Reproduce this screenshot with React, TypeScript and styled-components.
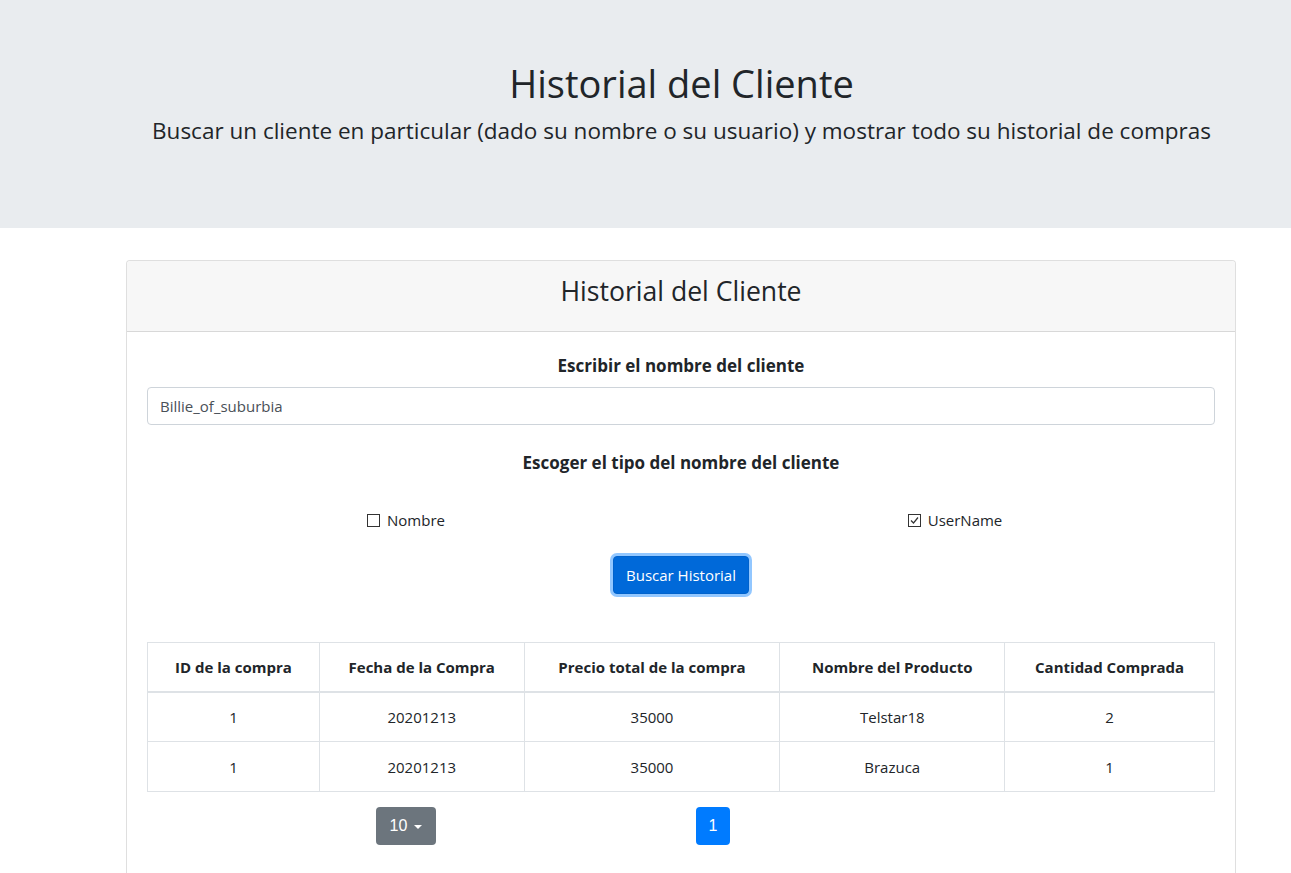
import React from "react";
import styled, { createGlobalStyle } from "styled-components";

const Global = createGlobalStyle`
  html, body { margin: 0; padding: 0; background: #fff; }
  body {
    font-family: "Segoe UI", "Open Sans", "Noto Sans", sans-serif;
    color: #212529;
    font-size: 16px;
    overflow: hidden;
  }
  * { box-sizing: border-box; }
`;

const Jumbotron = styled.header`
  background: #e9ecef;
  height: 228px;
  display: flex;
  flex-direction: column;
  align-items: center;
  padding-top: 57px;
  padding-left: 72px;
`;

const Title = styled.h1`
  margin: 0;
  font-size: 38px;
  font-weight: 400;
  line-height: 52px;
`;

const Lead = styled.p`
  margin: 7px 0 0;
  font-size: 22.5px;
  line-height: 30px;
  font-weight: 400;
  white-space: nowrap;
`;

const Main = styled.main`
  padding: 32px 0 0 126px;
`;

const Card = styled.section`
  width: 1110px;
  border: 1px solid rgba(0, 0, 0, 0.125);
  border-radius: 4px;
  background: #fff;
`;

const CardHeader = styled.div`
  height: 71px;
  background: #f7f7f7;
  border-bottom: 1px solid rgba(0, 0, 0, 0.125);
  display: flex;
  align-items: center;
  justify-content: center;
  padding-bottom: 10px;
  font-size: 26.6px;
  font-weight: 400;
  border-radius: 4px 4px 0 0;
`;

const CardBody = styled.div`
  padding: 20px 20px 60px;
  display: flex;
  flex-direction: column;
`;

const Label = styled.label<{ $mt?: number }>`
  display: block;
  text-align: center;
  font-weight: 700;
  font-size: 17px;
  line-height: 24px;
  margin-top: ${(p) => p.$mt ?? 0}px;
`;

const Input = styled.input`
  margin-top: 9px;
  width: 100%;
  height: 38px;
  border: 1px solid #ced4da;
  border-radius: 4px;
  padding: 6px 12px;
  font: inherit;
  font-size: 15px;
  color: #495057;
  outline: none;
`;

const CheckRow = styled.div`
  margin-top: 33px;
  display: grid;
  grid-template-columns: 1fr 1fr;
`;

const CheckItem = styled.label<{ $shift: number }>`
  display: flex;
  align-items: center;
  justify-content: center;
  gap: 7px;
  font-size: 15px;
  line-height: 24px;
  transform: translateX(${(p) => p.$shift}px);
`;

const BoxIcon = styled.svg`
  width: 13px;
  height: 13px;
  flex: none;
`;

const ButtonRow = styled.div`
  display: flex;
  justify-content: center;
  margin-top: 24px;
`;

const PrimaryButton = styled.button`
  height: 38px;
  padding: 0 12px;
  background: #0069d9;
  color: #fff;
  border: 1px solid #0062cc;
  border-radius: 4px;
  font: inherit;
  font-size: 15px;
  box-shadow: 0 0 0 3px rgba(38, 143, 255, 0.5);
`;

const Table = styled.table`
  margin-top: 48px;
  width: 100%;
  border-collapse: collapse;
  font-size: 15px;
`;

const Th = styled.th<{ $w: number }>`
  width: ${(p) => p.$w}px;
  height: 49px;
  border: 1px solid #dee2e6;
  border-bottom: 2px solid #dee2e6;
  font-weight: 700;
  text-align: center;
  vertical-align: middle;
  padding: 0 12px;
`;

const Td = styled.td`
  height: 50px;
  border: 1px solid #dee2e6;
  text-align: center;
  vertical-align: middle;
  padding: 0 12px;
`;

const Pager = styled.div`
  margin-top: 15px;
  display: grid;
  grid-template-columns: 1fr 1fr;
  align-items: center;
`;

const SizeCell = styled.div`
  display: flex;
  padding-left: 229px;
`;

const PageCell = styled.div`
  display: flex;
  padding-left: 15px;
`;

const SizeButton = styled.button`
  height: 38px;
  width: 60px;
  background: #6c757d;
  color: #fff;
  border: none;
  border-radius: 4px;
  font-family: "Liberation Sans", Arial, sans-serif;
  font-size: 16px;
  display: flex;
  align-items: center;
  justify-content: center;
  gap: 7px;
`;

const Caret = styled.span`
  width: 0;
  height: 0;
  border-left: 4px solid transparent;
  border-right: 4px solid transparent;
  border-top: 4px solid #fff;
  margin-top: 1px;
`;

const PageButton = styled.button`
  height: 38px;
  width: 34px;
  background: #007bff;
  color: #fff;
  border: none;
  border-radius: 4px;
  font-family: "Liberation Sans", Arial, sans-serif;
  font-size: 16px;
`;

const Box = ({ checked }: { checked: boolean }) => (
  <BoxIcon viewBox="0 0 13 13">
    <rect x="0.5" y="0.5" width="12" height="12" fill="#fff" stroke="#333" strokeWidth="1" />
    {checked && <path d="M3 6.5 L5.5 9 L10 3.5" fill="none" stroke="#333" strokeWidth="1.2" />}
  </BoxIcon>
);

const rows = [
  ["1", "20201213", "35000", "Telstar18", "2"],
  ["1", "20201213", "35000", "Brazuca", "1"],
];

const headers: [string, number][] = [
  ["ID de la compra", 172],
  ["Fecha de la Compra", 205],
  ["Precio total de la compra", 256],
  ["Nombre del Producto", 225],
  ["Cantidad Comprada", 210],
];

export default function App() {
  return (
    <>
      <Global />
      <Jumbotron>
        <Title>Historial del Cliente</Title>
        <Lead>
          Buscar un cliente en particular (dado su nombre o su usuario) y mostrar todo su historial de compras
        </Lead>
      </Jumbotron>
      <Main>
        <Card>
          <CardHeader>Historial del Cliente</CardHeader>
          <CardBody>
            <Label $mt={2}>Escribir el nombre del cliente</Label>
            <Input defaultValue="Billie_of_suburbia" />
            <Label $mt={26}>Escoger el tipo del nombre del cliente</Label>
            <CheckRow>
              <CheckItem $shift={-8}>
                <Box checked={false} />
                Nombre
              </CheckItem>
              <CheckItem $shift={7}>
                <Box checked={true} />
                UserName
              </CheckItem>
            </CheckRow>
            <ButtonRow>
              <PrimaryButton>Buscar Historial</PrimaryButton>
            </ButtonRow>
            <Table>
              <thead>
                <tr>
                  {headers.map(([h, w]) => (
                    <Th key={h} $w={w}>
                      {h}
                    </Th>
                  ))}
                </tr>
              </thead>
              <tbody>
                {rows.map((r, i) => (
                  <tr key={i}>
                    {r.map((c, j) => (
                      <Td key={j}>{c}</Td>
                    ))}
                  </tr>
                ))}
              </tbody>
            </Table>
            <Pager>
              <SizeCell>
                <SizeButton>
                  10 <Caret />
                </SizeButton>
              </SizeCell>
              <PageCell>
                <PageButton>1</PageButton>
              </PageCell>
            </Pager>
          </CardBody>
        </Card>
      </Main>
    </>
  );
}
